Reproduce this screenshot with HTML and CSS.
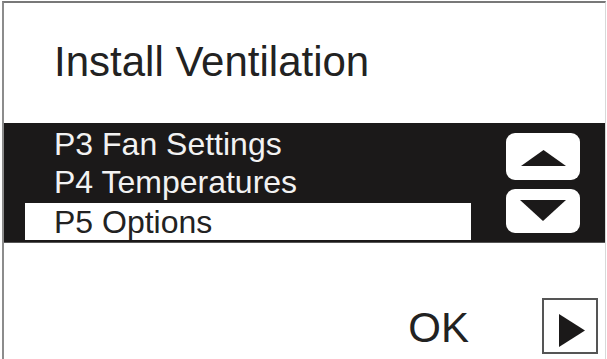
FILE: index.html
```html
<!DOCTYPE html>
<html lang="en">
<head>
<meta charset="utf-8">
<title>Install Ventilation</title>
<link rel="stylesheet" href="styles.css">
</head>
<body>
<div class="screen">
  <header class="head">
    <h1 class="title">Install Ventilation</h1>
  </header>
  <section class="band">
    <ul class="menu">
      <li class="item">P3 Fan Settings</li>
      <li class="item">P4 Temperatures</li>
      <li class="item selected">P5 Options</li>
    </ul>
    <div class="scroll">
      <button class="btn up" type="button" aria-label="Up">
        <svg width="45" height="16" viewBox="0 0 45 16"><polygon points="0,16 22.5,0 45,16" fill="#1b1919"/></svg>
      </button>
      <button class="btn down" type="button" aria-label="Down">
        <svg width="46" height="21" viewBox="0 0 46 21"><polygon points="0,0 46,0 23,21" fill="#1b1919"/></svg>
      </button>
    </div>
  </section>
  <footer class="foot">
    <span class="ok">OK</span>
    <button class="next" type="button" aria-label="Next">
      <svg width="26" height="33" viewBox="0 0 26 33"><polygon points="0,0 26,16.5 0,33" fill="#1b1919"/></svg>
    </button>
  </footer>
</div>
</body>
</html>
```

FILE: styles.css
```css
html, body {
  margin: 0;
  padding: 0;
  background: #ffffff;
}

body {
  font-family: "Liberation Sans", Arial, sans-serif;
  color: #222222;
  width: 607px;
  height: 359px;
  overflow: hidden;
}

.screen {
  box-sizing: border-box;
  margin: 1px 0 0 2px;
  width: 604px;
  height: 358px;
  border-top: 2px solid #787878;
  border-left: 2px solid #8c8c8c;
  border-right: 1px solid #d8d8d8;
  display: flex;
  flex-direction: column;
}

.head {
  height: 120px;
  padding: 38px 0 0 50px;
  box-sizing: border-box;
}

.title {
  margin: 0;
  font-weight: normal;
  font-size: 42px;
  line-height: 42px;
  color: #222222;
}

.band {
  height: 119px;
  background: #1b1919;
  display: flex;
  justify-content: space-between;
  border-bottom: 1px solid #555;
}

.menu {
  list-style: none;
  margin: 0;
  padding: 2px 0 0 0;
}

.item {
  font-size: 32px;
  line-height: 38px;
  height: 38px;
  padding-left: 50px;
  color: #f2f2f2;
  white-space: nowrap;
}

.item.selected {
  margin: 2px 0 0 21px;
  width: 446px;
  height: 37px;
  box-sizing: border-box;
  padding: 2px 0 0 29px;
  line-height: 35px;
  background: #ffffff;
  color: #222222;
}

.scroll {
  display: flex;
  flex-direction: column;
  gap: 9px;
  padding-top: 10px;
  margin-right: 25px;
}

.btn {
  width: 74px;
  border: none;
  border-radius: 9px;
  background: #ffffff;
  padding: 0;
  display: flex;
  justify-content: center;
  align-items: flex-start;
}

.btn.up {
  height: 47px;
  padding-top: 17px;
  box-sizing: border-box;
}

.btn.down {
  height: 44px;
  padding-top: 11px;
  box-sizing: border-box;
}

.foot {
  display: flex;
  justify-content: flex-end;
  align-items: flex-start;
  padding: 55px 7px 0 0;
}

.ok {
  font-size: 42px;
  line-height: 56px;
  padding-top: 2px;
  margin-right: 73px;
  color: #222222;
}

.next {
  box-sizing: border-box;
  width: 56px;
  height: 56px;
  border: 2px solid #555555;
  background: #ffffff;
  padding: 14px 0 0 15px;
  display: flex;
  align-items: flex-start;
  justify-content: flex-start;
}
```
